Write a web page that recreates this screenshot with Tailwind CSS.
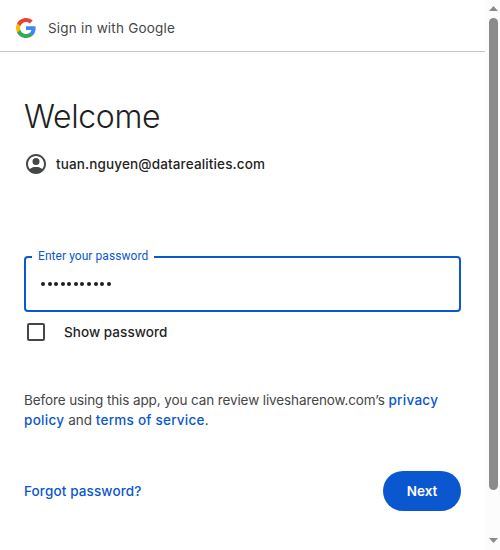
<!DOCTYPE html>
<html lang="en">
<head>
<meta charset="utf-8">
<title>Sign in with Google</title>
<script src="https://cdn.jsdelivr.net/npm/@tailwindcss/browser@4"></script>
</head>
<body class="flex h-[550px] w-[500px] overflow-hidden bg-white font-['Inter',sans-serif] text-[14px] leading-5 text-[#1f1f1f]">
<div class="flex w-[485px] flex-col">
  <header class="flex h-[52px] shrink-0 items-center gap-3 border-b border-[#c4c7c5] pb-[3px] pt-2 pl-4">
    <svg class="size-5" viewBox="2 2 44 44">
      <path fill="#4285f4" d="M45.12 24.5c0-1.56-.14-3.06-.4-4.5H24v8.51h11.84c-.51 2.75-2.06 5.08-4.39 6.64v5.52h7.11c4.16-3.83 6.56-9.47 6.56-16.17z"/>
      <path fill="#34a853" d="M24 46c5.94 0 10.92-1.97 14.56-5.33l-7.11-5.52c-1.97 1.32-4.49 2.1-7.45 2.1-5.73 0-10.58-3.87-12.31-9.07H4.34v5.7C7.96 41.07 15.4 46 24 46z"/>
      <path fill="#fbbc05" d="M11.69 28.18C11.25 26.86 11 25.45 11 24s.25-2.86.69-4.18v-5.7H4.34C2.85 17.09 2 20.45 2 24s.85 6.91 2.34 9.88l7.35-5.7z"/>
      <path fill="#ea4335" d="M24 10.75c3.23 0 6.13 1.11 8.41 3.29l6.31-6.31C34.91 4.18 29.93 2 24 2 15.4 2 7.96 6.93 4.34 14.12l7.35 5.7c1.73-5.2 6.58-9.07 12.31-9.07z"/>
    </svg>
    <span class="whitespace-nowrap text-[13.5px] tracking-[0.2px] text-[#444746]">Sign in with Google</span>
  </header>
  <main class="flex flex-col pl-6 pt-[45px]">
    <h1 class="h-10 font-light text-[32px] leading-10 tracking-[-0.35px]">Welcome</h1>
    <div class="mt-[17px] flex h-5 items-center gap-[10px] pl-0.5">
      <svg class="size-5" viewBox="2 2 20 20" fill="#444746"><path d="M12 2C6.48 2 2 6.48 2 12s4.48 10 10 10 10-4.48 10-10S17.52 2 12 2zM7.35 18.5C8.66 17.56 10.26 17 12 17s3.34.56 4.65 1.5C15.34 19.44 13.74 20 12 20s-3.34-.56-4.65-1.5zm10.79-1.38C16.45 15.8 14.32 15 12 15s-4.45.8-6.14 2.12C4.7 15.73 4 13.95 4 12c0-4.42 3.58-8 8-8s8 3.58 8 8c0 1.95-.7 3.73-1.86 5.12z"/><path d="M5.2 18.1C7 15.8 9.4 15 12 15s5 .8 6.8 3.1L15.5 21h-7z"/><circle cx="12" cy="9.5" r="3.5"/></svg>
      <span class="whitespace-nowrap font-medium text-[13.5px] tracking-[0.14px]">tuan.nguyen@datarealities.com</span>
    </div>
    <fieldset class="mt-[75px] h-[63px] w-[437px] rounded-[4px] border-2 border-[#0b57d0] pl-[15px]">
      <legend class="-ml-[9px] h-[15px] px-[6px] font-[Roboto,sans-serif] text-[12px] leading-[14px] tracking-[0.06px] text-[#0b57d0]">Enter your password</legend>
      <div class="flex h-[38px] items-center gap-[2.57px] pt-px" role="textbox" aria-label="Password">
        <i class="size-1 rounded-full bg-[#1f1f1f]"></i><i class="size-1 rounded-full bg-[#1f1f1f]"></i><i class="size-1 rounded-full bg-[#1f1f1f]"></i><i class="size-1 rounded-full bg-[#1f1f1f]"></i><i class="size-1 rounded-full bg-[#1f1f1f]"></i><i class="size-1 rounded-full bg-[#1f1f1f]"></i><i class="size-1 rounded-full bg-[#1f1f1f]"></i><i class="size-1 rounded-full bg-[#1f1f1f]"></i><i class="size-1 rounded-full bg-[#1f1f1f]"></i><i class="size-1 rounded-full bg-[#1f1f1f]"></i><i class="size-1 rounded-full bg-[#1f1f1f]"></i>
      </div>
    </fieldset>
    <label class="mt-[10px] flex h-5 items-center gap-[19px] pl-[3px]">
      <span class="size-[18px] rounded-[2px] border-2 border-[#444746]"></span>
      <span class="font-medium text-[13.5px] tracking-[0.05px]">Show password</span>
    </label>
    <p class="mt-12 h-10 whitespace-nowrap text-[13.5px] text-[#444746]"><span class="tracking-[-0.11px]">Before using this app, you can review livesharenow.com’s <a class="font-medium tracking-[0.3px] text-[#0b57d0]">privacy</a></span><br><span><a class="font-medium tracking-[0.3px] text-[#0b57d0]">policy</a> and <a class="font-medium tracking-[0.24px] text-[#0b57d0]">terms of service</a>.</span></p>
    <div class="mt-[41px] flex h-10 w-[437px] items-center justify-between">
      <a class="font-medium text-[13.5px] tracking-[0.12px] text-[#0b57d0]">Forgot password?</a>
      <button class="h-10 w-[78px] rounded-full bg-[#0b57d0] font-semibold text-[13.5px] text-white">Next</button>
    </div>
  </main>
</div>
<div class="flex w-[15px] flex-col items-center bg-[#fcfcfc] pl-px">
  <svg class="mt-[6px] h-[5px] w-[9px] shrink-0" viewBox="0 0 9 5" fill="#8b8b8b"><path d="M4.5 0 9 5H0z"/></svg>
  <div class="mt-[7px] h-[472px] w-[9px] shrink-0 rounded-full bg-[#8b8b8b]"></div>
  <svg class="mt-[48px] h-[5px] w-[9px] shrink-0" viewBox="0 0 9 5" fill="#8b8b8b"><path d="M0 0h9L4.5 5z"/></svg>
</div>
</body>
</html>
